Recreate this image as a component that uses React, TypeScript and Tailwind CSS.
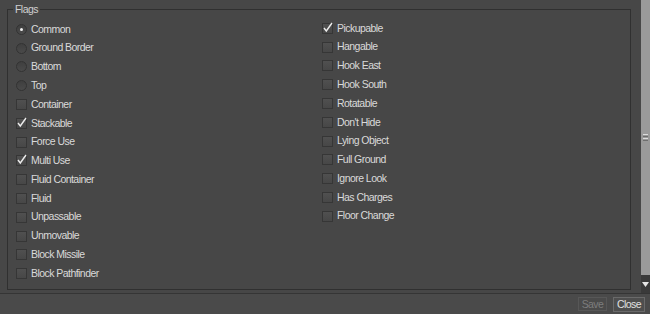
import React from "react";

const leftFlags = [
  { name: "Common", kind: "radio", on: true },
  { name: "Ground Border", kind: "radio", on: false },
  { name: "Bottom", kind: "radio", on: false },
  { name: "Top", kind: "radio", on: false },
  { name: "Container", kind: "check", on: false },
  { name: "Stackable", kind: "check", on: true },
  { name: "Force Use", kind: "check", on: false },
  { name: "Multi Use", kind: "check", on: true },
  { name: "Fluid Container", kind: "check", on: false },
  { name: "Fluid", kind: "check", on: false },
  { name: "Unpassable", kind: "check", on: false },
  { name: "Unmovable", kind: "check", on: false },
  { name: "Block Missile", kind: "check", on: false },
  { name: "Block Pathfinder", kind: "check", on: false },
];

const rightFlags = [
  { name: "Pickupable", kind: "check", on: true },
  { name: "Hangable", kind: "check", on: false },
  { name: "Hook East", kind: "check", on: false },
  { name: "Hook South", kind: "check", on: false },
  { name: "Rotatable", kind: "check", on: false },
  { name: "Don't Hide", kind: "check", on: false },
  { name: "Lying Object", kind: "check", on: false },
  { name: "Full Ground", kind: "check", on: false },
  { name: "Ignore Look", kind: "check", on: false },
  { name: "Has Charges", kind: "check", on: false },
  { name: "Floor Change", kind: "check", on: false },
];

function Flag({ name, kind, on }: { name: string; kind: string; on: boolean }) {
  return (
    <div className="h-[18.8px] flex items-center gap-[4px]">
      {kind === "radio" ? (
        <span className="w-[11px] h-[11px] rounded-full border border-[#333] bg-gradient-to-b from-[#3f3f3f] to-[#4a4a4a] flex items-center justify-center">
          {on && <span className="w-[3px] h-[3px] rounded-full bg-[#f0f0f0]" />}
        </span>
      ) : (
        <span className="relative w-[11px] h-[11px] border border-[#363636] bg-gradient-to-b from-[#505050] to-[#474747]">
          {on && (
            <svg width="11" height="11" viewBox="0 0 11 11" className="absolute -left-px -top-[2px] overflow-visible">
              <path d="M2 6 L4.3 9 L10 1" fill="none" stroke="#ececec" strokeWidth="1.4" />
            </svg>
          )}
        </span>
      )}
      <span className="text-[#dadada]">{name}</span>
    </div>
  );
}

export default function App() {
  return (
    <div className="w-[650px] h-[314px] bg-[#474747] flex flex-col text-[10.5px] tracking-[-0.55px] font-['Liberation_Sans',Arial,sans-serif] overflow-hidden">
      <div className="h-[293px] flex">
        <div className="flex-1 pl-[7px] pr-[10px]">
          <fieldset className="mt-[3px] h-[287px] border border-[#303030] pl-[8px] pt-[5px]">
            <legend className="-ml-[3px] px-[2px] text-[#d0d0d0] leading-[12px]">Flags</legend>
            <div className="grid grid-cols-[306px_1fr]">
              <div>
                {leftFlags.map((f) => (
                  <Flag key={f.name} {...f} />
                ))}
              </div>
              <div className="-mt-[1px]">
                {rightFlags.map((f) => (
                  <Flag key={f.name} {...f} />
                ))}
              </div>
            </div>
          </fieldset>
        </div>
        <div className="w-[9px] flex flex-col">
          <div className="flex-1 bg-[#9a9a9a] flex flex-col items-center justify-center gap-[1px]">
            <span className="w-[5px] h-px bg-[#dcdcdc]" />
            <span className="w-[5px] h-px bg-[#6e6e6e]" />
            <span className="w-[5px] h-px bg-[#dcdcdc]" />
            <span className="w-[5px] h-px bg-[#6e6e6e]" />
          </div>
          <div className="h-[18px] bg-[#3a3a3a] flex items-center justify-center">
            <svg width="7" height="5" viewBox="0 0 7 5">
              <path d="M0 0 L7 0 L3.5 5 Z" fill="#e6e6e6" />
            </svg>
          </div>
        </div>
      </div>
      <div className="flex-1 border-t border-[#353535] bg-[#4a4a4a] flex items-center justify-end gap-[6px] pr-[5px]">
        <button className="w-[29px] h-[14px] border border-[#575757] text-[#7d7d7d] leading-none">Save</button>
        <button className="w-[32px] h-[15px] border border-[#6a6a6a] bg-[#4e4e4e] text-[#e0e0e0] leading-none">Close</button>
      </div>
    </div>
  );
}
